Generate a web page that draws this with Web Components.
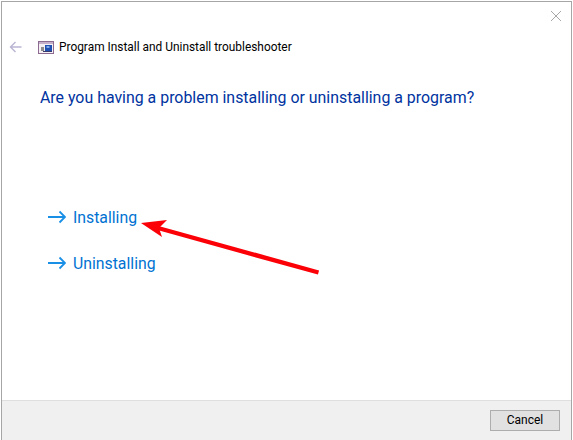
<!DOCTYPE html>
<html>
<head>
<meta charset="utf-8">
<title>Troubleshooter</title>
<style>
  html, body { margin: 0; height: 100%; background: #fff; }
</style>
</head>
<body>
<tr-window>
  <tr-titlebar title-text="Program Install and Uninstall troubleshooter"></tr-titlebar>
  <tr-heading>Are you having a problem installing or uninstalling a program?</tr-heading>
  <tr-links>
    <tr-link>Installing</tr-link>
    <tr-link>Uninstalling</tr-link>
  </tr-links>
  <tr-button slot="footer">Cancel</tr-button>
</tr-window>
<script>
(() => {
  const FONT = 'Roboto, "Noto Sans", "Liberation Sans", sans-serif';

  class TrWindow extends HTMLElement {
    constructor() {
      super();
      this.attachShadow({ mode: 'open' });
      this.shadowRoot.innerHTML = `
        <style>
          :host {
            display: block;
            position: relative;
            width: 573px;
            height: 440px;
            box-sizing: border-box;
            padding: 1px 1px 0 1px;
            overflow: hidden;
            font-family: ${FONT};
          }
          .frame {
            height: 100%;
            box-sizing: border-box;
            border: 1px solid #a6a6a6;
            border-bottom: 0;
            display: flex;
            flex-direction: column;
          }
          .close {
            flex: none;
            height: 26px;
            display: flex;
            justify-content: flex-end;
            padding: 8px 9px 0 0;
            box-sizing: border-box;
          }
          .close svg { display: block; }
          .body {
            flex: 1;
            display: flex;
            flex-direction: column;
          }
          .footer {
            flex: none;
            height: 40px;
            box-sizing: border-box;
            background: #f0f0f0;
            border-top: 1px solid #dfdfdf;
            display: flex;
            justify-content: flex-end;
            align-items: flex-start;
            padding: 9px 11px 0 0;
          }
          .arrow {
            position: absolute;
            left: 0;
            top: 0;
            pointer-events: none;
          }
        </style>
        <div class="frame">
          <div class="close">
            <svg width="12" height="12" viewBox="0 0 12 12">
              <path d="M1 1L11 11M11 1L1 11" stroke="#a8a8a8" stroke-width="1" fill="none"/>
            </svg>
          </div>
          <div class="body">
            <slot></slot>
          </div>
          <div class="footer"><slot name="footer"></slot></div>
        </div>
        <svg class="arrow" width="573" height="440" viewBox="0 0 573 440">
          <path d="M318.5 272.5L158 228" stroke="#fb0007" stroke-width="4.4" fill="none"/>
          <path d="M141 223L167 220L159 228L162 237Z" fill="#fb0007"/>
        </svg>
      `;
    }
  }

  class TrTitlebar extends HTMLElement {
    connectedCallback() {
      if (this.shadowRoot) return;
      this.attachShadow({ mode: 'open' });
      const text = this.getAttribute('title-text') || '';
      this.shadowRoot.innerHTML = `
        <style>
          :host {
            display: flex;
            align-items: center;
            height: 38px;
            padding-left: 7px;
            color: #000;
            font-size: 11.9px;
          }
          svg { display: block; flex: none; }
          .back { margin-right: 16px; }
          .app { margin-right: 5px; }
          span { white-space: nowrap; }
        </style>
        <svg class="back" width="13" height="12" viewBox="0 0 13 12">
          <path d="M12.5 6H1.5M6.5 1L1.5 6L6.5 11" stroke="#b9b5d3" stroke-width="1.4" fill="none"/>
        </svg>
        <svg class="app" width="16" height="13" viewBox="0 0 16 13">
          <rect x="0.5" y="0.5" width="15" height="12" fill="#f4f0f4" stroke="#8d6a8f"/>
          <rect x="1" y="1" width="14" height="2" fill="#c4b0c8"/>
          <rect x="7" y="4" width="7" height="6" fill="#1f4fb0"/>
          <rect x="8.5" y="5" width="3" height="2" fill="#7fa6e6"/>
          <rect x="3" y="6" width="3" height="4" fill="#8c8c8c"/>
          <rect x="5" y="10" width="9" height="1" fill="#3a3a6a"/>
        </svg>
        <span>${text}</span>
      `;
    }
  }

  class TrHeading extends HTMLElement {
    constructor() {
      super();
      this.attachShadow({ mode: 'open' });
      this.shadowRoot.innerHTML = `
        <style>
          :host {
            display: block;
            margin: 21px 0 0 38px;
            color: #0033a0;
            font-size: 15.9px;
            line-height: 22px;
            white-space: nowrap;
          }
        </style>
        <slot></slot>
      `;
    }
  }

  class TrLinks extends HTMLElement {
    constructor() {
      super();
      this.attachShadow({ mode: 'open' });
      this.shadowRoot.innerHTML = `
        <style>
          :host {
            display: flex;
            flex-direction: column;
            gap: 20px;
            margin-top: 95px;
          }
        </style>
        <slot></slot>
      `;
    }
  }

  class TrLink extends HTMLElement {
    constructor() {
      super();
      this.attachShadow({ mode: 'open' });
      this.shadowRoot.innerHTML = `
        <style>
          :host {
            display: flex;
            align-items: center;
            height: 26px;
            margin-left: 46px;
            color: #0072d2;
            font-size: 15.8px;
            cursor: pointer;
          }
          svg { display: block; flex: none; margin-right: 7px; }
        </style>
        <svg width="18" height="14" viewBox="0 0 18 14">
          <path d="M0 7H17M11.5 1.5L17 7L11.5 12.5" stroke="#1a8fe6" stroke-width="1.8" fill="none"/>
        </svg>
        <slot></slot>
      `;
    }
  }

  class TrButton extends HTMLElement {
    constructor() {
      super();
      this.attachShadow({ mode: 'open' });
      this.shadowRoot.innerHTML = `
        <style>
          :host {
            display: flex;
            align-items: center;
            justify-content: center;
            width: 70px;
            height: 21px;
            box-sizing: border-box;
            padding-bottom: 1px;
            background: #e1e1e1;
            border: 1px solid #adadad;
            color: #000;
            font-size: 12px;
          }
        </style>
        <slot></slot>
      `;
    }
  }

  customElements.define('tr-window', TrWindow);
  customElements.define('tr-titlebar', TrTitlebar);
  customElements.define('tr-heading', TrHeading);
  customElements.define('tr-links', TrLinks);
  customElements.define('tr-link', TrLink);
  customElements.define('tr-button', TrButton);
})();
</script>
</body>
</html>
